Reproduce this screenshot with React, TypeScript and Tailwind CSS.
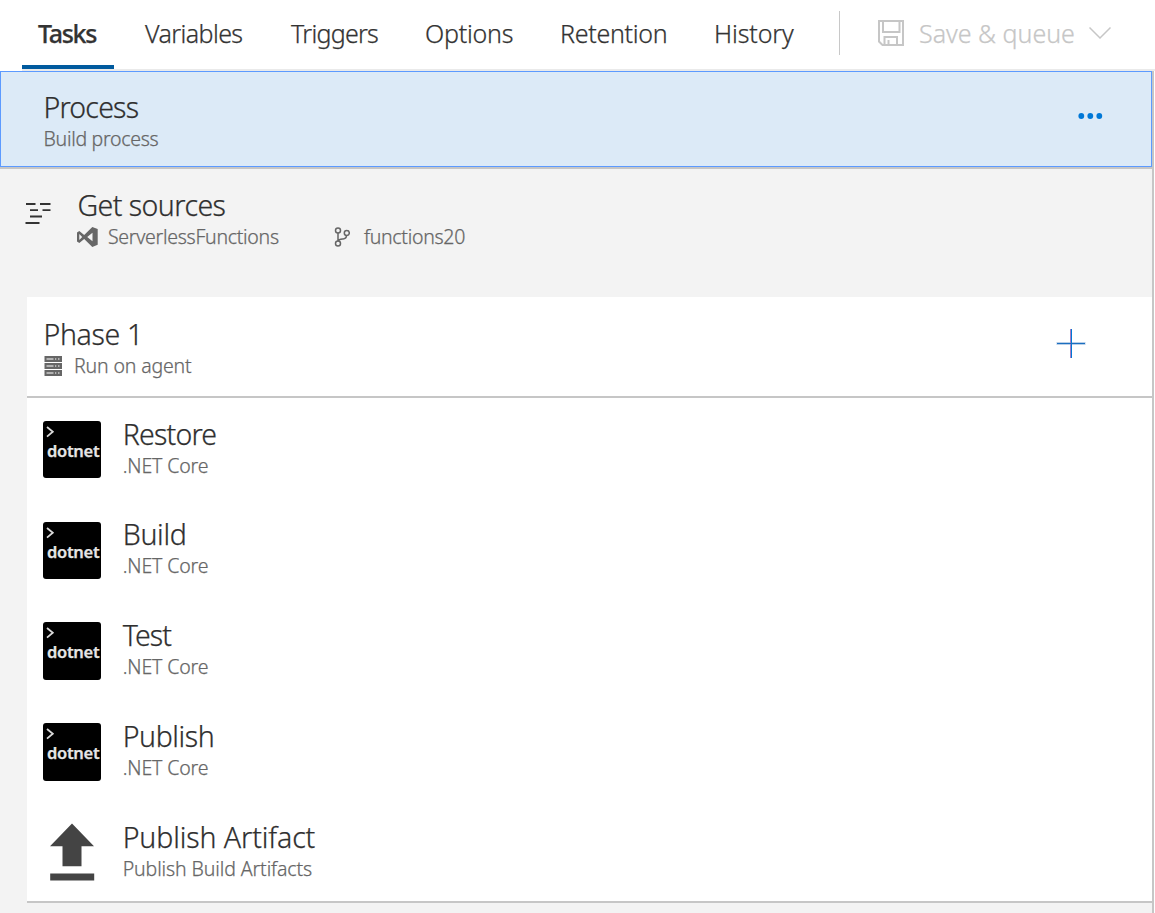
const tabs = [
  { label: 'Variables', pad: 'ml-[31px] w-[99px] tracking-[-0.6px]' },
  { label: 'Triggers', pad: 'ml-[47px] w-[88px] tracking-[-0.75px]' },
  { label: 'Options', pad: 'ml-[46px] w-[89px] tracking-[-0.25px]' },
  { label: 'Retention', pad: 'ml-[46px] w-[108px] tracking-[-0.3px]' },
  { label: 'History', pad: 'ml-[46px] w-[80px] tracking-[-0.13px]' },
];

const tasks = [
  { name: 'Restore', tracking: 'tracking-[-0.8px]' },
  { name: 'Build', tracking: 'tracking-[-0.3px]' },
  { name: 'Test', tracking: 'tracking-[-0.9px]' },
  { name: 'Publish', tracking: 'tracking-[-0.4px]' },
];

const titleClass = 'h-8 text-[28.5px] leading-[32px] text-[#2f2f2f]';
const subClass = 'h-[31px] text-[19.5px] leading-[31px] text-[#666666]';

function SaveIcon() {
  return (
    <svg width="26" height="26" viewBox="0 0 26 26" fill="none" stroke="#c6c6c6" strokeWidth="2">
      <path d="M1 1H25V25H4.5L1 21.5Z" />
      <path d="M5 1V12H21.5V1" />
      <path d="M6.5 25V17H19V25" />
      <path d="M10.5 20V25" />
    </svg>
  );
}

function SourcesIcon() {
  return (
    <svg width="26" height="22" viewBox="0 0 26 22" fill="#333333">
      <path d="M1 0h9.500v2H1zM15 0h10.500v2H15zM5 6.300h8v1.800H5zM17.500 6.300h8v1.800h-8zM5 12.600h12v2H5zM.5 19h14v2H.5z" />
    </svg>
  );
}

function VisualStudioIcon() {
  return (
    <svg width="21" height="20" viewBox="0 0 21 20" fill="#666666" fillRule="evenodd">
      <path d="M15.300 0L20.700 2V17.800L15.300 20L7.200 12L2.300 16L0 14.600V5.400L2.300 4L7.200 8ZM15.500 5.700L10.200 10L15.500 14.300ZM2.300 7.100V12.900L5.200 10Z" />
    </svg>
  );
}

function BranchIcon() {
  return (
    <svg width="16" height="20" viewBox="0 0 16 20" fill="none" stroke="#666666" strokeWidth="1.500">
      <circle cx="4" cy="3.500" r="2.500" />
      <circle cx="12.800" cy="6" r="2.500" />
      <circle cx="4" cy="16.500" r="2.500" />
      <path d="M4 6V14M12.500 8.500C12.500 11 11 11.700 9 11.900C6.500 12.100 5 12 4.300 14" />
    </svg>
  );
}

function ServerIcon() {
  return (
    <svg width="18" height="20" viewBox="0 0 18 20">
      {[0, 7, 14].map((y) => (
        <g key={y}>
          <rect x="0.500" y={y} width="17.500" height="6" fill="#666666" />
          <path d={`M2.500 ${y + 3}H9.500M11 ${y + 3}H12.300M14 ${y + 3}H15.500`} stroke="#ffffff" strokeWidth="1" />
        </g>
      ))}
    </svg>
  );
}

function DotnetIcon() {
  return (
    <div className="h-[57.500px] w-[58px] shrink-0 overflow-hidden rounded-[3px] bg-black text-[#e6e6e6]">
      <svg className="ml-[3px] mt-[5px] block" width="9" height="12" viewBox="0 0 9 12" fill="none" stroke="#d8d8d8" strokeWidth="1.800">
        <path d="M1 1L6.800 5.800L1 10.600" />
      </svg>
      <div className="ml-1 mt-[3px] h-5 whitespace-nowrap text-[16.500px] font-semibold leading-[20px] tracking-[-0.3px]">dotnet</div>
    </div>
  );
}

export default function App() {
  return (
    <div className="flex h-[913px] w-[1155px] flex-col overflow-hidden bg-white font-['Noto_Sans',sans-serif] font-light whitespace-nowrap [-webkit-text-stroke:0.25px]">
      <header className="ml-[22px] flex h-[71px] shrink-0 border-b-2 border-[#eaeaea] text-[25px] leading-[66px] text-[#333333]">
        <div className="h-[69px] w-[92px] border-b-4 border-[#005a9e] pl-4 font-medium tracking-[-1.3px]">Tasks</div>
        {tabs.map((tab) => (
          <div key={tab.label} className={tab.pad}>{tab.label}</div>
        ))}
        <div className="ml-[45px] mt-[11px] h-11 w-px bg-[#c8c8c8]" />
        <div className="flex text-[#c6c6c6]">
          <div className="ml-[38px] mt-5"><SaveIcon /></div>
          <div className="ml-[15px] w-[156px]">Save &amp; queue</div>
          <svg className="ml-[14px] mt-[26px]" width="22" height="14" viewBox="0 0 22 14" fill="none" stroke="#c6c6c6" strokeWidth="1.500">
            <path d="M0.500 1.500L11 12L21.500 1.500" />
          </svg>
        </div>
      </header>

      <main className="flex w-[1154px] grow flex-col border-r-2 border-[#c6c6c6] bg-[#f3f3f3]">
        <section className="h-[98px] shrink-0 border-b-2 border-[#c6c6c6]">
          <div className="flex h-24 justify-between border border-[#5c9aff] bg-[#dceaf7] pl-[42.500px] pr-12 pt-[19px]">
            <div>
              <div className={`${titleClass} tracking-[-0.8px]`}>Process</div>
              <div className={`${subClass} tracking-[-0.28px]`}>Build process</div>
            </div>
            <svg className="mt-[22px]" width="25" height="6" viewBox="0 0 25 6" fill="#0078d7">
              <circle cx="3.300" cy="3" r="2.900" />
              <circle cx="12.300" cy="3" r="2.900" />
              <circle cx="21.300" cy="3" r="2.900" />
            </svg>
          </div>
        </section>

        <section className="flex h-32 shrink-0 pl-[25px] pt-5">
          <div className="mt-[14px] w-[52px]"><SourcesIcon /></div>
          <div>
            <div className={`${titleClass} pl-[0.500px] tracking-[-0.55px]`}>Get sources</div>
            <div className={`${subClass} flex items-center`}>
              <VisualStudioIcon />
              <span className="ml-[10px] w-[226px] tracking-[-0.28px]">ServerlessFunctions</span>
              <BranchIcon />
              <span className="ml-[14px] tracking-[-0.3px]">functions20</span>
            </div>
          </div>
        </section>

        <section className="ml-[27px] flex h-[101px] shrink-0 justify-between border-b-2 border-[#c6c6c6] bg-white pl-[17px] pr-[66px] pt-[21px]">
          <div>
            <div className={`${titleClass} -ml-[0.500px] tracking-[-0.35px]`}>Phase 1</div>
            <div className={`${subClass} flex items-center`}>
              <ServerIcon />
              <span className="ml-3 tracking-[-0.15px]">Run on agent</span>
            </div>
          </div>
          <svg className="mt-[10px]" width="30" height="30" viewBox="0 0 30 30" fill="none">
            <path d="M0.500 15.500H29.500" stroke="#b9cfe8" strokeWidth="3" />
            <path d="M14.500 1V30" stroke="#a77fc4" />
            <path d="M15.500 1V30" stroke="#0078d7" />
            <path d="M1 15.500H29" stroke="#1b6fc0" />
          </svg>
        </section>

        <section className="ml-[27px] h-[505px] shrink-0 border-b-2 border-[#c6c6c6] bg-white pl-4 pt-[19.600px]">
          {tasks.map((task) => (
            <div key={task.name} className="flex h-[100.800px]">
              <div className="mt-[3.200px]"><DotnetIcon /></div>
              <div className="ml-[21.700px]">
                <div className={`${titleClass} ${task.tracking}`}>{task.name}</div>
                <div className={`${subClass} tracking-[-0.13px]`}>.NET Core</div>
              </div>
            </div>
          ))}
          <div className="flex">
            <svg className="mt-[2.200px] shrink-0" width="58" height="58" viewBox="0 0 58 58" fill="#444444">
              <path d="M29 0.500L51 23.200H38.500V43.200H19.500V23.200H7ZM7.200 50.500H51.200V57.500H7.200Z" />
            </svg>
            <div className="ml-[21.700px]">
              <div className={`${titleClass} tracking-[-0.1px]`}>Publish Artifact</div>
              <div className={`${subClass} tracking-[-0.1px]`}>Publish Build Artifacts</div>
            </div>
          </div>
        </section>
      </main>
    </div>
  );
}
